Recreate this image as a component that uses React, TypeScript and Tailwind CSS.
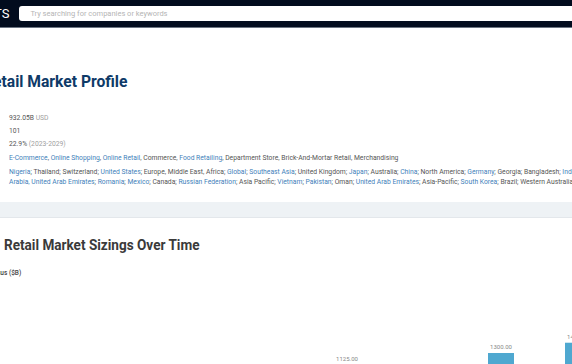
import React from 'react';

const keywords: [string, boolean][] = [
  ['E-Commerce', true],
  ['Online Shopping', true],
  ['Online Retail', true],
  ['Commerce', false],
  ['Food Retailing', true],
  ['Department Store', false],
  ['Brick-And-Mortar Retail', false],
  ['Merchandising', false],
];

const regionsA: [string, boolean][] = [
  ['Nigeria', true],
  ['Thailand', false],
  ['Switzerland', false],
  ['United States', true],
  ['Europe, Middle East, Africa', false],
  ['Global', true],
  ['Southeast Asia', true],
  ['United Kingdom', false],
  ['Japan', true],
  ['Australia', false],
  ['China', true],
  ['North America', false],
  ['Germany', true],
  ['Georgia', false],
  ['Bangladesh', false],
  ['Indonesia', true],
  ['Saudi', true],
];

const regionsB: [string, boolean][] = [
  ['Arabia, United Arab Emirates', true],
  ['Romania', true],
  ['Mexico', true],
  ['Canada', false],
  ['Russian Federation', true],
  ['Asia Pacific', false],
  ['Vietnam', true],
  ['Pakistan', true],
  ['Oman', false],
  ['United Arab Emirates', true],
  ['Asia-Pacific', false],
  ['South Korea', true],
  ['Brazil', false],
  ['Western Australia', false],
];

function TagList({ items, sep }: { items: [string, boolean][]; sep: string }) {
  return (
    <>
      {items.map(([t, link], i) => (
        <React.Fragment key={t + i}>
          <span className={link ? 'text-[#3f7fba]' : 'text-[#555]'}>{t}</span>
          {i < items.length - 1 && <span className="text-[#555]">{sep}</span>}
        </React.Fragment>
      ))}
    </>
  );
}

const bars = [
  { x: 334, value: 1125 },
  { x: 488, value: 1300 },
  { x: 565, value: 1450 },
];

function Chart() {
  // 1300 -> y 73 within the svg, 14.6 units per px
  const yOf = (v: number) => 73 - (v - 1300) / 14.6;
  return (
    <svg width="572" height="84" className="block mt-[3px]">
      {bars.map((b) => (
        <g key={b.x}>
          <rect x={b.x} y={yOf(b.value)} width="26" height="200" fill="#4fa8d0" />
          <text
            x={b.x + 13}
            y={yOf(b.value) - 4}
            textAnchor="middle"
            fontSize="6"
            fill="#888"
            fontFamily="Roboto, sans-serif"
          >
            {b.value.toFixed(2)}
          </text>
        </g>
      ))}
    </svg>
  );
}

export default function App() {
  return (
    <div className="w-[572px] h-[364px] overflow-hidden bg-white font-['Roboto',sans-serif]">
      <header className="h-[28px] bg-[#020c1e] border-b border-[#6b7482] flex items-center">
        <span className="ml-[-6px] text-white text-[13px] leading-none">TS</span>
        <div className="ml-[10px] h-[15px] w-[600px] shrink-0 bg-white rounded-[3px] flex items-center pl-[11px]">
          <span className="text-[7.5px] text-[#b5b5b5]">Try searching for companies or keywords</span>
        </div>
      </header>

      <div className="mt-[45px] h-[17px] flex items-center">
        <h1 className="inline-block origin-left scale-x-[0.92] ml-[-17px] whitespace-nowrap text-[#0e3a68] text-[17px] font-bold leading-none">
          Retail Market Profile
        </h1>
      </div>

      <div className="mt-[24px] pl-[9px] text-[6.75px] leading-[9px] whitespace-nowrap text-[#555] flex flex-col">
        <div>
          932.05B <span className="text-[#a0a0a0]">USD</span>
        </div>
        <div className="mt-[4px]">101</div>
        <div className="mt-[4px]">
          22.9% <span className="text-[#a0a0a0]">(2023-2029)</span>
        </div>
        <div className="mt-[5px]">
          <TagList items={keywords} sep=", " />
        </div>
        <div className="mt-[5px]">
          <TagList items={regionsA} sep="; " />
        </div>
        <div className="mt-[1px]">
          <TagList items={regionsB} sep="; " />
        </div>
      </div>

      <div className="mt-[15px] h-[16px] bg-[#eef2f5] border-b border-[#e3e7eb]" />

      <div className="mt-[20px] h-[16px] flex items-center">
        <h2 className="inline-block origin-left scale-x-[0.875] ml-[4px] whitespace-nowrap text-[#3a3a3a] text-[15.5px] font-bold leading-none">
          Retail Market Sizings Over Time
        </h2>
      </div>

      <div className="mt-[16px] ml-[-25px] text-[6.5px] font-medium text-[#444] leading-none whitespace-nowrap">
        Consensus ($B)
      </div>

      <Chart />
    </div>
  );
}
